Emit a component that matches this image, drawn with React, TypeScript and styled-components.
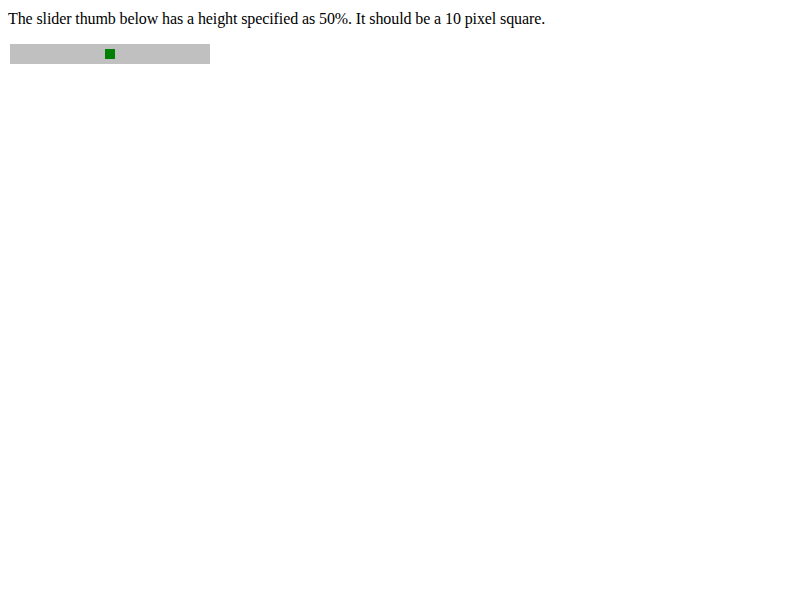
import React from 'react';
import styled, { createGlobalStyle } from 'styled-components';

const GlobalStyle = createGlobalStyle`
  body {
    margin: 8px;
    background: #ffffff;
    color: #000000;
    font-family: "Liberation Serif", "Times New Roman", serif;
    font-size: 16px;
  }
`;

const Note = styled.div`
  line-height: 18px;
  padding-top: 2px;
  margin: 0 0 16px 0;
  letter-spacing: -0.1px;
`;

const Track = styled.div`
  width: 200px;
  height: 20px;
  margin: 2px;
  background-color: #c0c0c0;
  display: flex;
  align-items: center;
  justify-content: center;
`;

const Thumb = styled.div`
  width: 10px;
  height: 50%;
  background-color: #008000;
`;

const App = () => {
  return (
    <>
      <GlobalStyle />
      <Note>The slider thumb below has a height specified as 50%. It should be a 10 pixel square.</Note>
      <Track role="slider" aria-valuenow={50} aria-valuemin={0} aria-valuemax={100}>
        <Thumb />
      </Track>
    </>
  );
};

export default App;
